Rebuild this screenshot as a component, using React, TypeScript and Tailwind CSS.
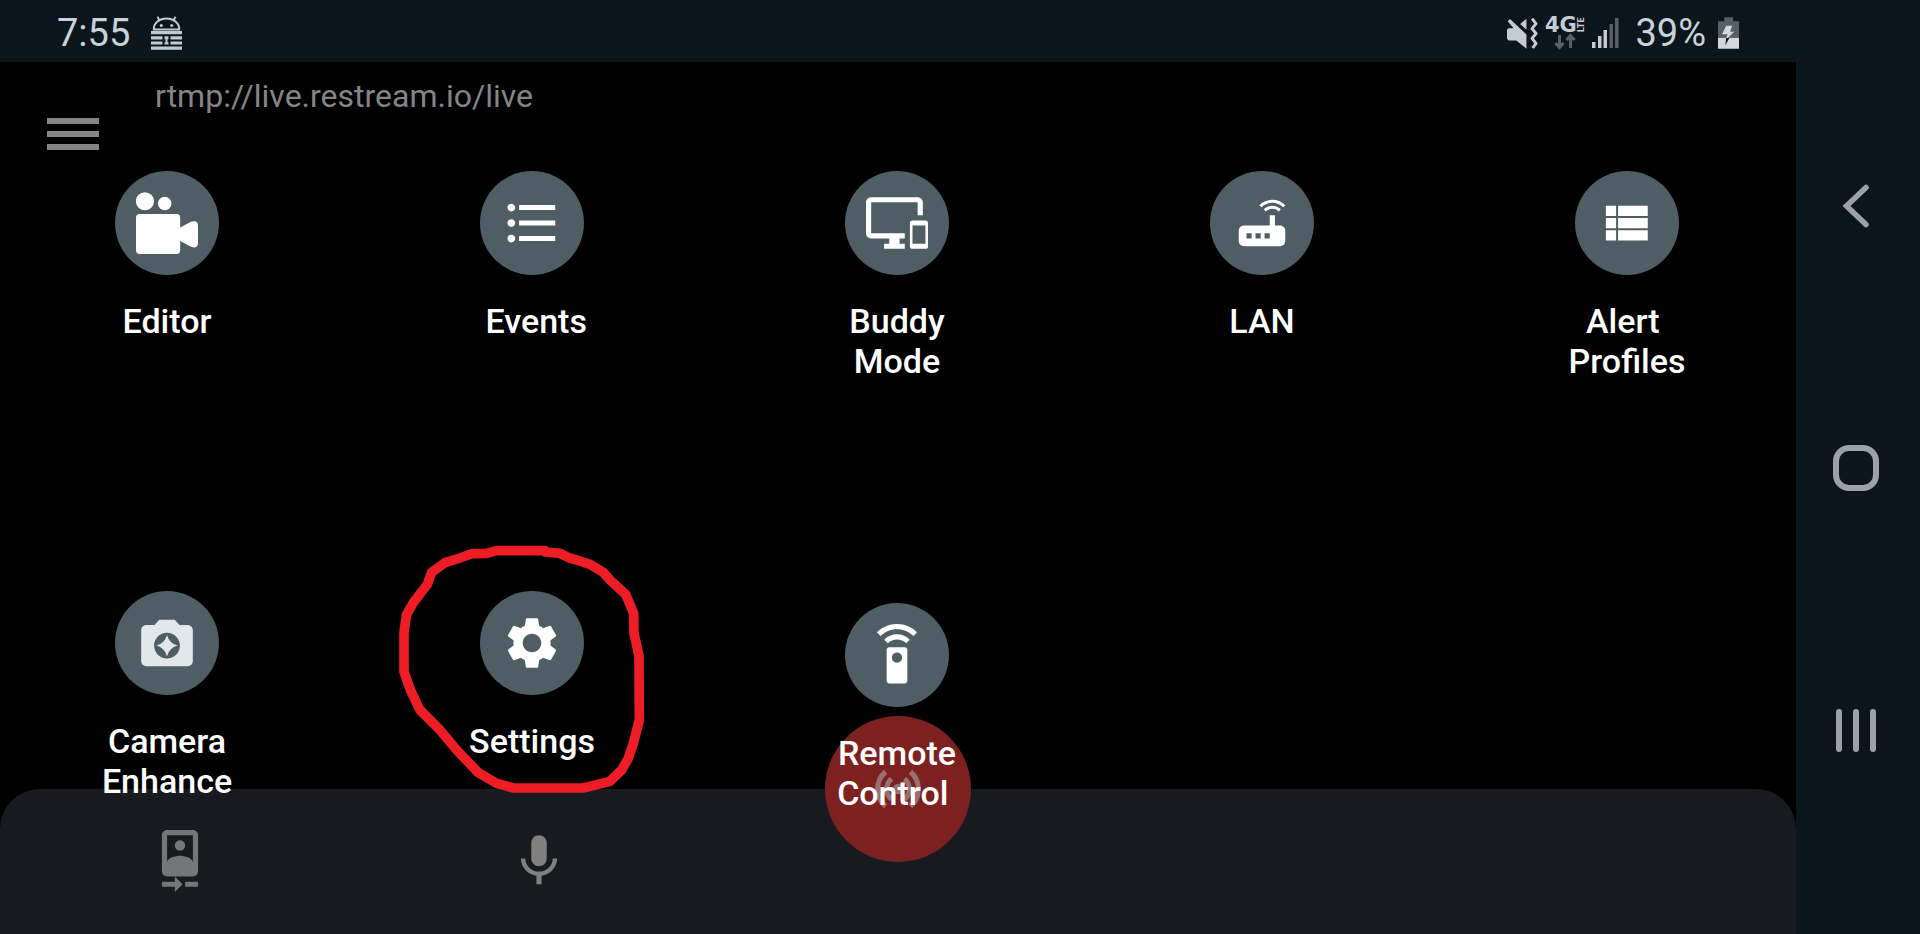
import type { ReactNode } from "react";
import { MdFormatListBulleted, MdRouter, MdSettings, MdSettingsRemote, MdCameraFront } from "react-icons/md";

function EditorIcon() {
  return (
    <svg viewBox="137 95 188 188" className="size-[62px] fill-current" aria-hidden="true">
      <circle cx="164" cy="123" r="27.5" />
      <circle cx="224" cy="130" r="20.5" />
      <rect x="137" y="162" width="134" height="121" rx="11" />
      <path d="M268 204 L304 185 Q325 179 325 197 V250 Q325 268 304 261 L268 242 Z" />
    </svg>
  );
}

function BuddyIcon() {
  return (
    <svg viewBox="0 0 24 24" className="size-[62px] fill-current" aria-hidden="true">
      <path d="M23 11H18a1 1 0 0 0-1 1v9a1 1 0 0 0 1 1h5a1 1 0 0 0 1-1v-9a1 1 0 0 0-1-1zM23 20h-5v-7h5v7zM20 2H2C.89 2 0 2.89 0 4v12c0 1.1.89 2 2 2h7v2H7v2h8v-2h-2v-2h2v-2H2V4h18v5h2V4c0-1.11-.9-2-2-2z" />
    </svg>
  );
}

function ProfilesIcon() {
  return (
    <svg viewBox="167 95 188 188" className="size-[62px] fill-current" aria-hidden="true">
      <path d="M197 137h31v31h-31zM234 137h90v31h-90zM197 174h31v31h-31zM234 174h90v31h-90zM197 211h31v31h-31zM234 211h90v31h-90z" />
    </svg>
  );
}

function EnhanceIcon() {
  return (
    <svg viewBox="0 0 24 24" className="size-[62px] fill-[#e1e7ea]" aria-hidden="true">
      <path d="M9 3L7.17 5H4c-1.1 0-2 .9-2 2v12c0 1.1.9 2 2 2h16c1.1 0 2-.9 2-2V7c0-1.1-.9-2-2-2h-3.17L15 3H9zm3 15c-2.76 0-5-2.24-5-5s2.24-5 5-5 5 2.24 5 5-2.24 5-5 5z" />
      <path d="M12 8.9Q12.9 12.100 16.1 13Q12.9 13.9 12 17.1Q11.1 13.9 7.9 13Q11.1 12.100 12 8.9z" />
    </svg>
  );
}

function BroadcastIcon() {
  return (
    <svg viewBox="0 0 24 24" className="size-[62px] fill-none stroke-[#966f6e]" strokeWidth="2" aria-hidden="true">
      <path d="M7.2 5.300A8.8 8.800 0 0 0 7.2 18.700M16.8 5.300A8.800 8.800 0 0 1 16.8 18.700M9.500 8A5.200 5.200 0 0 0 9.500 16M14.500 8A5.200 5.200 0 0 1 14.500 16" />
      <circle cx="12" cy="12" r="1" />
    </svg>
  );
}

function MicIcon() {
  return (
    <svg viewBox="0 0 24 24" className="size-[62px] fill-current" aria-hidden="true">
      <path d="M12 14c1.66 0 2.99-1.34 2.99-3L15 5c0-1.66-1.34-3-3-3S9 3.34 9 5v6c0 1.66 1.34 3 3 3zm5.3-3c0 3-2.54 5.1-5.3 5.1S6.7 14 6.7 11H5c0 3.41 2.72 6.23 6 6.72V21h2v-3.28c3.28-.48 6-3.3 6-6.72h-1.7z" />
    </svg>
  );
}

function AndroidLockIcon() {
  return (
    <svg viewBox="0 0 31 34" className="h-[34px] w-[31px]" aria-hidden="true">
      <g className="fill-none stroke-[#bccbd0]" strokeWidth="2">
        <path d="M2.8 13.5V13a12.7 10.5 0 0 1 25.4 0v.5zM8.5 4.5L6.5 .8M22.5 4.5L24.5 .8" />
      </g>
      <g className="fill-[#bccbd0]">
        <circle cx="10.3" cy="9.4" r="1.5" />
        <circle cx="20.7" cy="9.4" r="1.5" />
        <path d="M0 15h31v3.200H0zM0 20.2h11.5v3.200H0zM19.5 20.2H31v3.200H19.5zM0 25.4h11.5v3.200H0zM19.5 25.4H31v3.200H19.5zM0 30.6h31v3.200H0z" />
        <path d="M13.5 20.2h4v3h-1v3h1v2.2h-4v-2.2h1v-3h-1z" />
      </g>
    </svg>
  );
}

function MuteVibrateIcon() {
  return (
    <svg viewBox="80 48 94 94" className="size-[31px]" aria-hidden="true">
      <path className="fill-[#c5ccd1]" d="M80 84L84 79L100 79L82 58L89 51L139 98V141L108 116H85L80 111zM120 66L139 50V84z" />
      <path className="fill-none stroke-[#c5ccd1]" strokeWidth="9" strokeLinejoin="round" d="M156 50L168 65L156 80L168 95L156 110L168 125L158 139" />
    </svg>
  );
}

function NetworkIcon() {
  return (
    <svg viewBox="0 0 38 36" className="h-9 w-[38px] overflow-visible" role="img" aria-label="4G LTE">
      <text x="-1" y="17" className="fill-[#c5ccd1] font-['DejaVu_Sans'] text-[21px] font-bold">4G</text>
      <text transform="translate(38 17) rotate(-90)" className="fill-[#c5ccd1] font-['Roboto'] text-[9px] font-bold">LTE</text>
      <path className="fill-none stroke-[#566067]" strokeWidth="3" d="M13.500 20V32M9.500 28L13.500 32.500L17.500 28M24.500 33V21M20.500 25L24.500 20.500L28.500 25" />
    </svg>
  );
}

function SignalIcon() {
  return (
    <svg viewBox="0 0 27 30" className="h-[30px] w-[27px]" aria-hidden="true">
      <path className="fill-[#c5ccd1]" d="M0 24h3.500v6H0zM6 18h3.500v12H6zM11.500 12h3.500v18h-3.500z" />
      <path className="fill-[#566067]" d="M17.500 6h3.500v24h-3.500zM23 0h3.500v30H23z" />
    </svg>
  );
}

function BatteryIcon() {
  return (
    <svg viewBox="713 48 64 96" className="h-8 w-[21px]" aria-hidden="true">
      <path className="fill-[#566067]" d="M732 48h27v12h18v52h-64V60h19z" />
      <path className="fill-[#d3d8dc]" d="M713 111h64v33h-64z" />
      <path className="fill-[#d3d8dc]" d="M738 74h18l-6 18h12l-20 20h-4l4-12h-17z" />
      <path className="fill-[#0a151c]" d="M738 111h10l-13 22z" />
    </svg>
  );
}

function Scribble() {
  return (
    <svg
      viewBox="0 0 810 810"
      className="pointer-events-none absolute -top-[61px] -left-[70px] size-[270px] max-w-none fill-none stroke-[#ee1c25]"
      strokeWidth="29"
      strokeLinejoin="round"
      strokeLinecap="round"
      aria-hidden="true"
    >
      <path d="M465 62L320 62L290 70L245 71L210 84L165 98L125 127L112 163L70 218L50 253L42 305V425L62 482L90 540L150 600L200 660L265 728L320 760L370 774H580L660 754L695 720L715 685L730 640L748 570L747 378L732 310L731 250L707 193L660 150L640 127L600 103L560 90L538 84L510 70L465 66" />
    </svg>
  );
}

type Tile = { label: string; icon: ReactNode; className?: string; overlay?: ReactNode };

const tiles: Tile[] = [
  { label: "Editor", icon: <EditorIcon /> },
  { label: " Events", icon: <MdFormatListBulleted className="size-[62px]" /> },
  { label: "Buddy\nMode", icon: <BuddyIcon /> },
  { label: "LAN", icon: <MdRouter className="size-[62px]" /> },
  { label: "Alert \nProfiles", icon: <ProfilesIcon /> },
  { label: "Camera\nEnhance", icon: <EnhanceIcon /> },
  { label: "Settings", icon: <MdSettings className="size-[62px]" />, overlay: <Scribble /> },
  { label: "Remote\nControl ", icon: <MdSettingsRemote className="size-[62px]" />, className: "mt-3" },
];

function StatusBar() {
  return (
    <header className="flex h-[62px] items-center justify-between bg-[#0a151c] pr-[181px] pl-[57px] text-[38px] leading-none text-[#c8d2d8]">
      <div className="flex items-center gap-[21px] pt-1">
        <time>7:55</time>
        <AndroidLockIcon />
      </div>
      <div className="flex items-center gap-2 pt-1">
        <MuteVibrateIcon />
        <NetworkIcon />
        <SignalIcon />
        <span className="ml-2">39%</span>
        <span className="ml-1"><BatteryIcon /></span>
      </div>
    </header>
  );
}

function NavBar() {
  return (
    <nav aria-label="System" className="flex w-[124px] flex-col items-center justify-between bg-[#0a151c] pt-[114px] pr-1 pb-[174px] text-[#9aa1a7]">
      <button type="button" aria-label="Back" className="flex size-[60px] items-center justify-center">
        <svg viewBox="0 0 26 44" className="h-11 w-[26px] fill-none stroke-current" strokeWidth="5.500" strokeLinecap="round">
          <path d="M23 3.500L3.500 22L23 40.500" />
        </svg>
      </button>
      <button type="button" aria-label="Home" className="flex size-[60px] items-center justify-center">
        <span className="size-[46px] rounded-[16px] border-[6px] border-current" />
      </button>
      <button type="button" aria-label="Recent apps" className="flex size-[60px] items-center justify-center gap-[11px]">
        <span className="h-[43px] w-1.5 rounded-full bg-current" />
        <span className="h-[43px] w-1.5 rounded-full bg-current" />
        <span className="h-[43px] w-1.5 rounded-full bg-current" />
      </button>
    </nav>
  );
}

export default function App() {
  return (
    <div className="flex min-h-screen flex-col overflow-hidden bg-black font-['Roboto',sans-serif]">
      <StatusBar />
      <div className="flex flex-1">
        <main className="flex flex-1 flex-col">
          <div className="flex h-[109px] items-start pl-[47px] text-[#858585]">
            <button type="button" aria-label="Menu" className="mt-14 flex w-[52px] flex-col gap-[7px]">
              <span className="h-1.5 w-full bg-current" />
              <span className="h-1.5 w-full bg-current" />
              <span className="h-1.5 w-full bg-current" />
            </button>
            <p className="mt-3.5 ml-14 text-[32px] leading-10">rtmp://live.restream.io/live</p>
          </div>
          <section className="relative z-10 grid min-h-0 flex-1 auto-rows-[420px] grid-cols-[repeat(5,144px)] items-start justify-between pr-[97px] pl-[95px]">
            {tiles.map((tile) => (
              <button
                key={tile.label}
                type="button"
                className={`relative flex flex-col items-center gap-[26px] text-[34px] leading-10 font-medium text-white ${tile.className ?? ""}`}
              >
                <span className="flex size-[104px] items-center justify-center rounded-full bg-[#4f5d64]">{tile.icon}</span>
                <span className="text-center whitespace-pre">{tile.label}</span>
                {tile.overlay}
              </button>
            ))}
          </section>
          <footer className="-mt-[222px] grid h-[145px] grid-cols-5 justify-items-center rounded-t-[40px] bg-[#171b1f] pt-[41px] text-[#747778]">
            <button type="button" aria-label="Switch camera" className="size-[62px]">
              <MdCameraFront className="size-[62px]" />
            </button>
            <button type="button" aria-label="Microphone" className="size-[62px] text-[#808080]">
              <MicIcon />
            </button>
            <button type="button" aria-label="Go live" className="-mt-[114px] flex size-[146px] items-center justify-center rounded-full bg-[#7c2020]">
              <BroadcastIcon />
            </button>
          </footer>
        </main>
        <NavBar />
      </div>
    </div>
  );
}
